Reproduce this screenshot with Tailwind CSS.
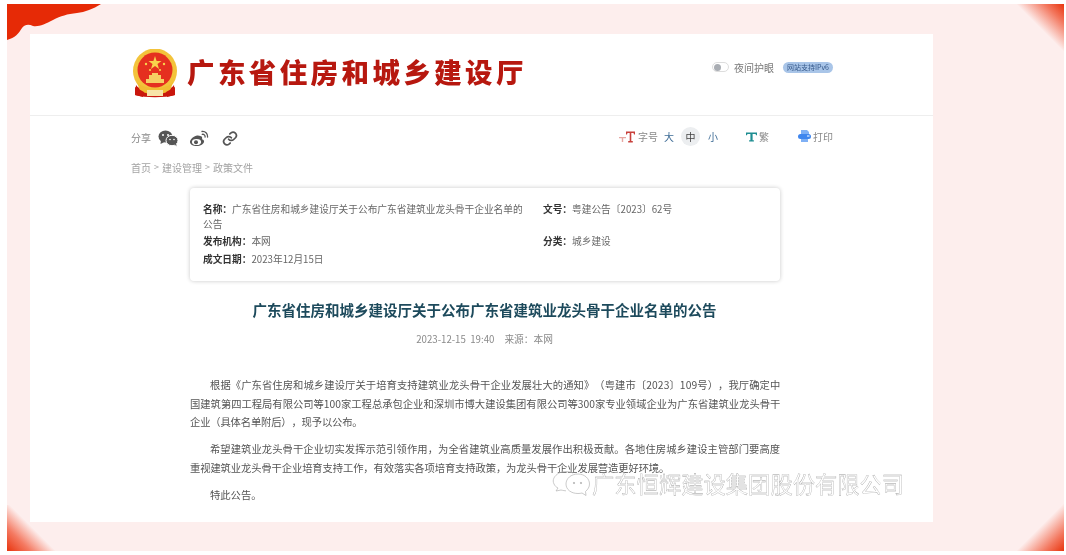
<!DOCTYPE html>
<html lang="zh">
<head>
<meta charset="utf-8">
<script src="https://cdn.jsdelivr.net/npm/@tailwindcss/browser@4"></script>
</head>
<body class="bg-white overflow-hidden font-['Noto_Sans_CJK_SC','Noto_Sans',sans-serif]">
<div class="h-[555px] w-[1066px] pt-[4px] pb-[4px] pl-[7px] pr-[2px]">
  <div class="relative h-[547px] bg-[#fdeeed] pt-[30px] pl-[23px] pr-[131px] overflow-hidden">
    <svg class="absolute left-0 top-0" width="100" height="38" viewBox="0 0 100 38"><path d="M0 0H94C86 5 78 8 70 9C60 10 54 12 46 16C38 20 32 23 26 22C22 20 18 20 15 24C12 29 8 34 0 36Z" fill="#e62a06"/></svg>
    <div class="absolute right-0 top-0 w-[48px] h-[48px] bg-[linear-gradient(225deg,#e8340e_0%,#f3775e_20%,#fdeeed_50%)]"></div>
    <div class="absolute left-0 bottom-0 w-[48px] h-[46px] bg-[linear-gradient(45deg,#e8340e_0%,#f47a62_25%,#fdeeed_52%)]"></div>
    <div class="absolute right-0 bottom-0 w-[48px] h-[48px] bg-[linear-gradient(315deg,#e8340e_0%,#f3775e_20%,#fdeeed_50%)]"></div>

    <main class="relative w-[903px] h-[488px] bg-white overflow-hidden blur-[0.45px]">
      <header class="h-[82px] border-b border-[#eeeeee] pl-[102px] pr-[100px] flex items-center justify-between">
        <div class="flex items-center">
          <svg width="46" height="49" viewBox="0 0 46 49" class="mt-[-3px]">
            <path d="M4 36C9 44 37 44 42 36L43 46C32 49 14 49 3 46Z" fill="#c9170d"/>
            <ellipse cx="23" cy="22" rx="22" ry="22.5" fill="#f3c33b"/>
            <ellipse cx="23" cy="21" rx="17.5" ry="17.5" fill="#e5301f"/>
            <path d="M23 7L24.6 12H29.5L25.5 15L27 20L23 17L19 20L20.5 15L16.5 12H21.4Z" fill="#f8d24c"/>
            <circle cx="14" cy="15" r="1.2" fill="#f8d24c"/><circle cx="32" cy="15" r="1.2" fill="#f8d24c"/><circle cx="18" cy="21" r="1.1" fill="#f8d24c"/><circle cx="28" cy="21" r="1.1" fill="#f8d24c"/>
            <path d="M14 30H32V34H14ZM17 26H29V30H17ZM20 24H26V26H20Z" fill="#f6cf63"/>
            <path d="M5 33C11 41 35 41 41 33L38 42C30 46 16 46 8 42Z" fill="#f1bd32"/>
            <path d="M15 41H31V47H15Z" fill="#f7e3a8"/>
            <path d="M3 38L12 43L11 48L3 46ZM43 38L34 43L35 48L43 46Z" fill="#c9170d"/>
          </svg>
          <h1 class="ml-[9px] text-[27.5px] leading-none font-black text-[#b7180f] tracking-[3.4px] whitespace-nowrap mt-[-5px]">广东省住房和城乡建设厅</h1>
        </div>
        <div class="flex items-center gap-[5px] mt-[-15px]">
          <span class="relative w-[17px] h-[10px] rounded-full border border-[#dddddd] bg-white">
            <span class="absolute left-[1px] top-[0.5px] w-[7px] h-[7px] rounded-full bg-[#a9adb3]"></span>
          </span>
          <span class="text-[10px] text-[#777777] whitespace-nowrap">夜间护眼</span>
          <span class="ml-[4px] h-[11px] w-[50px] rounded-full bg-[#a9c5e8] text-[#36598a] text-[7px] leading-[11px] text-center whitespace-nowrap">网站支持IPv6</span>
        </div>
      </header>

      <div class="pl-[101px] pr-[100px] h-[44px] flex items-center justify-between text-[10px] text-[#888888]">
        <div class="flex items-center">
          <span class="mt-[-2px]">分享</span>
          <svg class="ml-[7px]" width="20" height="17" viewBox="0 0 20 17" fill="#555555">
            <ellipse cx="7.5" cy="6.5" rx="7" ry="6"/><path d="M3 10L2.5 14L6.500 12Z"/>
            <ellipse cx="14" cy="10.500" rx="6" ry="5.200" stroke="#ffffff" stroke-width="1"/><path d="M16.500 14L18.500 16.500L18 13Z"/>
            <circle cx="5" cy="5" r="1" fill="#fff"/><circle cx="10" cy="5" r="1" fill="#fff"/><circle cx="12" cy="9.500" r=".8" fill="#fff"/><circle cx="16" cy="9.500" r=".8" fill="#fff"/>
          </svg>
          <svg class="ml-[11px]" width="20" height="17" viewBox="0 0 20 17" fill="none">
            <path d="M8 5.500C3.500 6.500 .8 10 1 12.300C1.300 15 5 16.500 9 16C13 15.500 15.500 13 15 11C14.700 10 13.800 9.500 13 9.300C13.500 7.500 13 6.500 12 6.200C10.500 5.500 9 5.300 8 5.500Z" fill="#555555"/>
            <ellipse cx="7.500" cy="12" rx="4.600" ry="3.100" fill="#fff"/><circle cx="7" cy="12.300" r="2" fill="#555555"/>
            <path d="M13 1.500C16 1 19 3.500 18.600 7M13.300 4.300C14.800 4 16.400 5.200 16.100 7" stroke="#555555" stroke-width="1.300" stroke-linecap="round"/>
          </svg>
          <svg class="ml-[13px]" width="16" height="17" viewBox="0 0 24 24" fill="none" stroke="#555555" stroke-width="2.600" stroke-linecap="round">
            <path d="M10 13a5 5 0 0 0 7.500.5l3-3a5 5 0 0 0-7-7l-1.700 1.700"/><path d="M14 11a5 5 0 0 0-7.500-.5l-3 3a5 5 0 0 0 7 7l1.700-1.700"/>
          </svg>
        </div>
        <div class="flex items-center mt-[-3px]">
          <svg width="16" height="12" viewBox="0 0 16 12"><path d="M0 6H7V7.200H4.200V11H2.800V7.200H0Z" fill="#e7a7a2"/><path d="M7 0.500H16V3.500H15L14.500 2H12.300V10H13.800V11.500H9.200V10H10.700V2H8.500L8 3.500H7Z" fill="#c8413c"/></svg>
          <span class="ml-[3px]">字号</span>
          <span class="ml-[6px] text-[#3e6c96]">大</span>
          <span class="ml-[7px] w-[19px] h-[19px] rounded-full bg-[#eceef0] text-[#444444] text-center leading-[19px]">中</span>
          <span class="ml-[8px] text-[#3e6c96]">小</span>
          <svg class="ml-[28px]" width="11" height="12" viewBox="0 0 12 12"><path d="M0 1H12V4H11L10.400 2.600H7.200V9.500H8.600V11H3.400V9.500H4.800V2.600H1.600L1 4H0Z" fill="#1f8e92"/></svg>
          <span class="ml-[2px]">繁</span>
          <svg class="ml-[29px]" width="13" height="13" viewBox="0 0 13 13"><path d="M3 0H9L11 2V4H3Z" fill="#7fb0f5"/><rect x="0" y="4" width="13" height="5" rx="2.500" fill="#3f86ee"/><rect x="3" y="9" width="7" height="3" fill="#7fb0f5"/><rect x="9" y="5.500" width="2.500" height="1" fill="#fff"/></svg>
          <span class="ml-[2px]">打印</span>
        </div>
      </div>

      <nav class="pl-[101px] mt-[-1px] h-[16px] flex items-center gap-[3px] text-[10px] text-[#a3a3a3]"><span>首页</span><span class="text-[9px]">&gt;</span><span>建设管理</span><span class="text-[9px]">&gt;</span><span>政策文件</span></nav>

      <section class="ml-[160px] mt-[13px] w-[590px] h-[93px] rounded-[4px] bg-white shadow-[0_0_4px_rgba(0,0,0,0.22)] pl-[13px] pt-[14px] text-[9.7px] leading-[15px] text-[#666666]">
        <div class="grid grid-cols-[340px_1fr] whitespace-nowrap">
          <div><b class="text-[#333333]">名称：</b>广东省住房和城乡建设厅关于公布广东省建筑业龙头骨干企业名单的<br>公告</div>
          <div><b class="text-[#333333]">文号：</b>粤建公告〔2023〕62号</div>
          <div class="mt-[2px]"><b class="text-[#333333]">发布机构：</b>本网</div>
          <div class="mt-[2px]"><b class="text-[#333333]">分类：</b>城乡建设</div>
          <div class="mt-[3px]"><b class="text-[#333333]">成文日期：</b>2023年12月15日</div>
        </div>
      </section>

      <h2 class="mt-[19px] pl-[6px] text-center text-[14.5px] leading-[20px] font-bold text-[#1d4a5c] whitespace-nowrap">广东省住房和城乡建设厅关于公布广东省建筑业龙头骨干企业名单的公告</h2>
      <p class="mt-[12px] pl-[6px] text-center text-[9.7px] leading-[14px] text-[#8a8a8a]"><span class="mr-[10px]">2023-12-15&nbsp; 19:40</span>来源：本网</p>

      <article class="ml-[160px] mt-[30px] w-[590px] text-[10.3px] leading-[18.5px] text-[#555555] [text-spacing-trim:space-all]">
        <p class="indent-[20px] whitespace-nowrap"><span class="tracking-[0.09px]">根据《广东省住房和城乡建设厅关于培育支持建筑业龙头骨干企业发展壮大的通知》（粤建市〔2023〕109号），我厅确定中</span><br>国建筑第四工程局有限公司等100家工程总承包企业和深圳市博大建设集团有限公司等300家专业领域企业为广东省建筑业龙头骨干<br><span class="tracking-[-0.15px]">企业（具体名单附后），现予以公布。</span></p>
        <p class="mt-[8.5px] indent-[20px] whitespace-nowrap"><span class="tracking-[0.07px]">希望建筑业龙头骨干企业切实发挥示范引领作用，为全省建筑业高质量发展作出积极贡献。各地住房城乡建设主管部门要高度</span><br><span class="tracking-[-0.1px]">重视建筑业龙头骨干企业培育支持工作，有效落实各项培育支持政策，为龙头骨干企业发展营造更好环境。</span></p>
        <p class="mt-[9px] indent-[20px]">特此公告。</p>
      </article>

      <div class="absolute left-[522px] top-[436px] flex items-center">
        <svg width="38" height="26" viewBox="0 0 38 26" fill="none" stroke="#b5b5b5" stroke-width="0.7">
          <path d="M21 3C17 1 11 1 7 3C2 6 0 10 2 14C3 16 4 17 6 18L4 21L9 20C11 20.500 13 20.800 14 20.800"/>
          <path d="M26 4C19 4 14 8.500 14 14C14 19.500 19 23.500 26 23.500C27.500 23.500 29 23.300 30 23L34 25.500L33.500 21.500C35.800 19.500 37.500 17 37.500 14C37.500 8.500 32.500 4 26 4Z" fill="#ffffff" fill-opacity="0.8"/>
          <circle cx="22" cy="13" r=".7" fill="#999"/><circle cx="29" cy="13" r=".7" fill="#999"/>
        </svg>
        <span class="ml-[2px] text-[22.3px] leading-none text-white/50 whitespace-nowrap [-webkit-text-stroke:0.3px_#999999]">广东恒辉建设集团股份有限公司</span>
      </div>
    </main>
  </div>
</div>
</body>
</html>
